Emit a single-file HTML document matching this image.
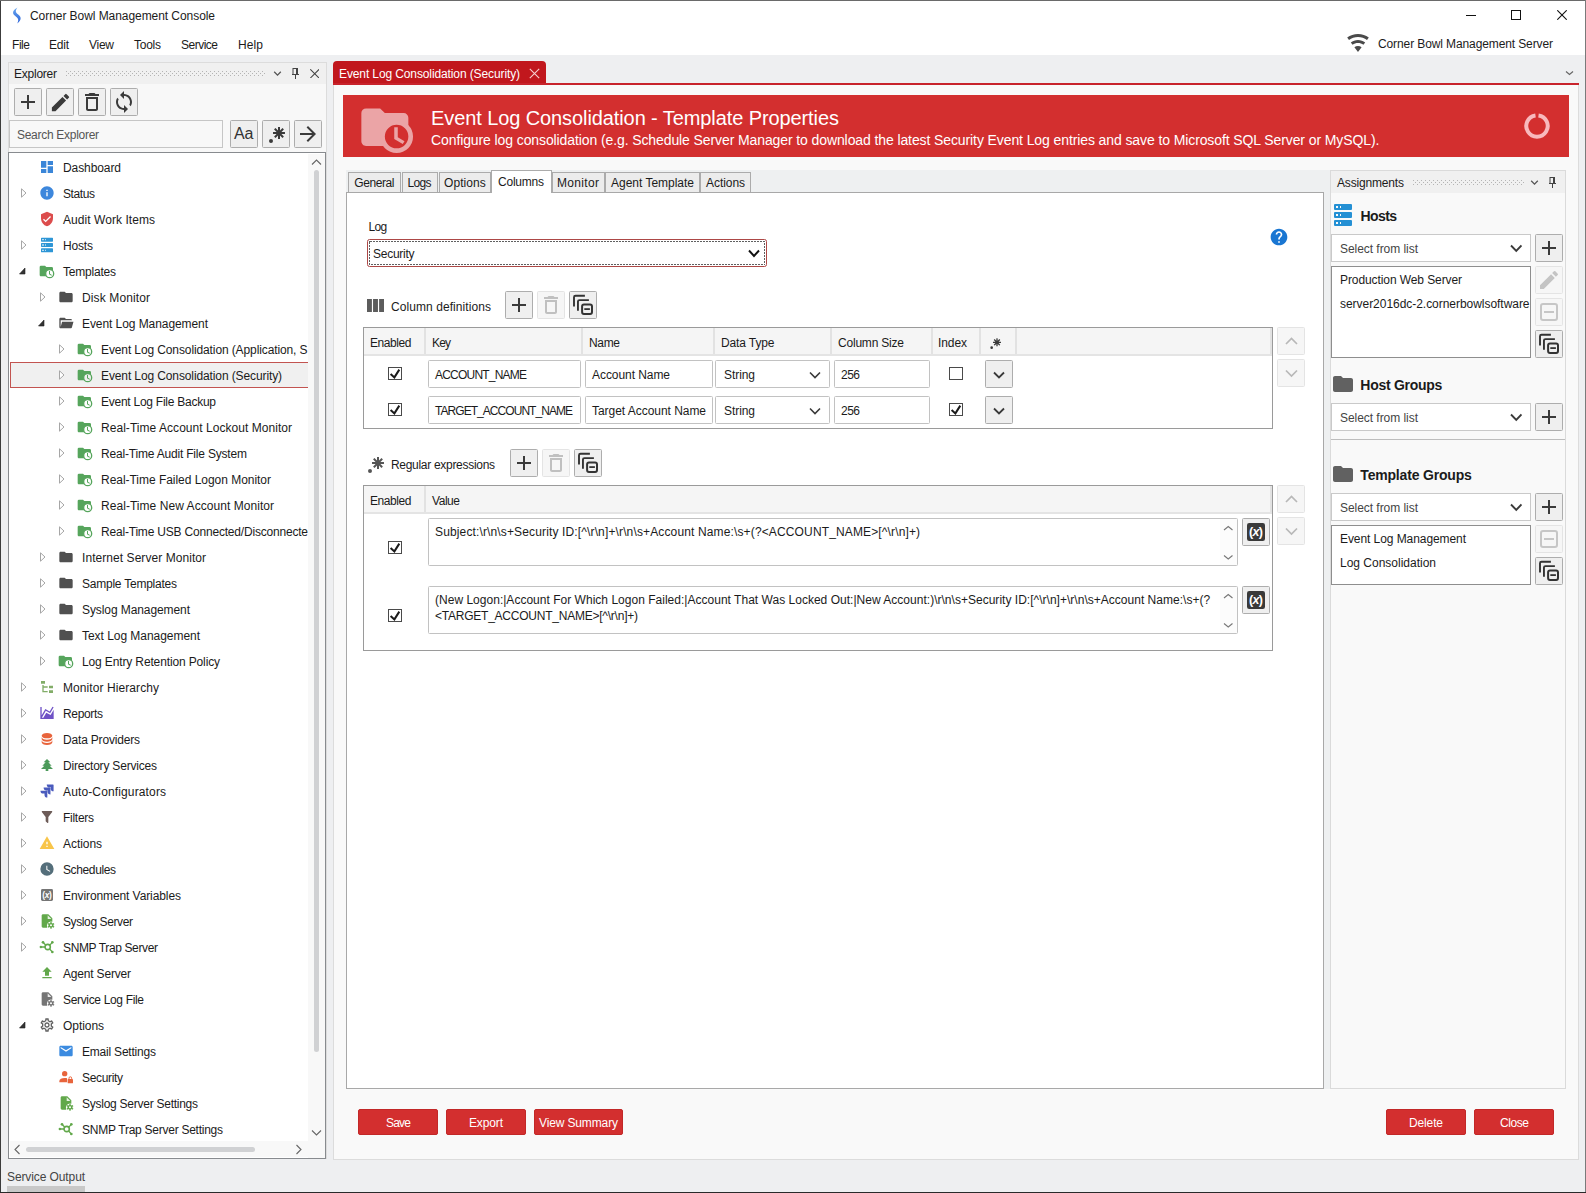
<!DOCTYPE html>
<html><head><meta charset="utf-8"><title>Corner Bowl Management Console</title>
<style>
html,body{margin:0;padding:0;}
body{width:1586px;height:1193px;overflow:hidden;background:#eeeff1;position:relative;font-family:"Liberation Sans",Arial,sans-serif;font-size:12px;}
#win{position:absolute;left:0;top:0;width:1586px;height:1193px;overflow:hidden;}
#win div,#win svg,#win span.t{position:absolute;}
span.t{white-space:pre;}
</style></head><body><div id="win">
<div style="left:0px;top:0px;width:1586px;height:31px;background:#fff;"></div>
<svg style="left:11px;top:6.5px;" width="12" height="18" viewBox="0 0 12 18"><defs><linearGradient id="lg1" x1="0" y1="0" x2="0" y2="1"><stop offset="0" stop-color="#6aa8f0"/><stop offset="1" stop-color="#2a62d8"/></linearGradient></defs><path d="M6.5 0.5C2 3 0.6 6.2 4 8.8C7.2 11.2 8.3 13 6.2 16.5C10.6 13.4 10.6 10 7.2 7.6C4.4 5.6 4 3.6 6.5 0.5Z" fill="url(#lg1)"/></svg>
<span class="t" style="left:30px;top:7.5px;font-size:12px;line-height:16px;color:#1b1b1b;letter-spacing:-0.060px;">Corner Bowl Management Console</span>
<div style="left:1466px;top:15px;width:10px;height:1px;background:#111;"></div>
<div style="left:1511px;top:10px;width:10px;height:10px;border:1px solid #111;box-sizing:border-box;"></div>
<svg style="left:1557px;top:10px;" width="10" height="10" viewBox="0 0 10 10"><path d="M0.3 0.3L9.7 9.7M9.7 0.3L0.3 9.7" stroke="#111" stroke-width="1.1"/></svg>
<div style="left:0px;top:31px;width:1586px;height:24px;background:#fff;"></div>
<span class="t" style="left:12px;top:36.5px;font-size:12px;line-height:16px;color:#1b1b1b;letter-spacing:-0.448px;">File</span>
<span class="t" style="left:49px;top:36.5px;font-size:12px;line-height:16px;color:#1b1b1b;letter-spacing:-0.224px;">Edit</span>
<span class="t" style="left:89px;top:36.5px;font-size:12px;line-height:16px;color:#1b1b1b;letter-spacing:-0.266px;">View</span>
<span class="t" style="left:134px;top:36.5px;font-size:12px;line-height:16px;color:#1b1b1b;letter-spacing:-0.254px;">Tools</span>
<span class="t" style="left:181px;top:36.5px;font-size:12px;line-height:16px;color:#1b1b1b;letter-spacing:-0.503px;">Service</span>
<span class="t" style="left:238px;top:36.5px;font-size:12px;line-height:16px;color:#1b1b1b;letter-spacing:0.104px;">Help</span>
<svg style="left:1346.2px;top:30.9px;" width="24" height="24" viewBox="0 0 24 24"><path d="M12,21L15.6,16.2C14.6,15.45 13.35,15 12,15C10.65,15 9.4,15.45 8.4,16.2L12,21M12,3C7.95,3 4.21,4.34 1.2,6.6L3,9C5.5,7.12 8.62,6 12,6C15.38,6 18.5,7.12 21,9L22.8,6.6C19.79,4.34 16.05,3 12,3M12,9C9.3,9 6.81,9.89 4.8,11.4L6.6,13.8C8.1,12.67 9.97,12 12,12C14.03,12 15.9,12.67 17.4,13.8L19.2,11.4C17.19,9.89 14.7,9 12,9Z" fill="#4a4a4a" /></svg>
<span class="t" style="left:1378px;top:36.0px;font-size:12px;line-height:16px;color:#1b1b1b;letter-spacing:-0.109px;">Corner Bowl Management Server</span>
<div style="left:8px;top:62px;width:319px;height:1097px;background:#f8f8f8;border:1px solid #dcdcdc;border-bottom:none;box-sizing:border-box;"></div>
<div style="left:9px;top:63px;width:317px;height:21px;background:#f0f0f0;"></div>
<span class="t" style="left:14px;top:65.5px;font-size:12px;line-height:16px;color:#1b1b1b;letter-spacing:-0.241px;">Explorer</span>
<svg style="left:66px;top:71px;" width="200" height="5" viewBox="0 0 200 5"><path d="M0 0h1v1h-1zM0 4h1v1h-1zM2 2h1v1h-1zM4 0h1v1h-1zM4 4h1v1h-1zM6 2h1v1h-1zM8 0h1v1h-1zM8 4h1v1h-1zM10 2h1v1h-1zM12 0h1v1h-1zM12 4h1v1h-1zM14 2h1v1h-1zM16 0h1v1h-1zM16 4h1v1h-1zM18 2h1v1h-1zM20 0h1v1h-1zM20 4h1v1h-1zM22 2h1v1h-1zM24 0h1v1h-1zM24 4h1v1h-1zM26 2h1v1h-1zM28 0h1v1h-1zM28 4h1v1h-1zM30 2h1v1h-1zM32 0h1v1h-1zM32 4h1v1h-1zM34 2h1v1h-1zM36 0h1v1h-1zM36 4h1v1h-1zM38 2h1v1h-1zM40 0h1v1h-1zM40 4h1v1h-1zM42 2h1v1h-1zM44 0h1v1h-1zM44 4h1v1h-1zM46 2h1v1h-1zM48 0h1v1h-1zM48 4h1v1h-1zM50 2h1v1h-1zM52 0h1v1h-1zM52 4h1v1h-1zM54 2h1v1h-1zM56 0h1v1h-1zM56 4h1v1h-1zM58 2h1v1h-1zM60 0h1v1h-1zM60 4h1v1h-1zM62 2h1v1h-1zM64 0h1v1h-1zM64 4h1v1h-1zM66 2h1v1h-1zM68 0h1v1h-1zM68 4h1v1h-1zM70 2h1v1h-1zM72 0h1v1h-1zM72 4h1v1h-1zM74 2h1v1h-1zM76 0h1v1h-1zM76 4h1v1h-1zM78 2h1v1h-1zM80 0h1v1h-1zM80 4h1v1h-1zM82 2h1v1h-1zM84 0h1v1h-1zM84 4h1v1h-1zM86 2h1v1h-1zM88 0h1v1h-1zM88 4h1v1h-1zM90 2h1v1h-1zM92 0h1v1h-1zM92 4h1v1h-1zM94 2h1v1h-1zM96 0h1v1h-1zM96 4h1v1h-1zM98 2h1v1h-1zM100 0h1v1h-1zM100 4h1v1h-1zM102 2h1v1h-1zM104 0h1v1h-1zM104 4h1v1h-1zM106 2h1v1h-1zM108 0h1v1h-1zM108 4h1v1h-1zM110 2h1v1h-1zM112 0h1v1h-1zM112 4h1v1h-1zM114 2h1v1h-1zM116 0h1v1h-1zM116 4h1v1h-1zM118 2h1v1h-1zM120 0h1v1h-1zM120 4h1v1h-1zM122 2h1v1h-1zM124 0h1v1h-1zM124 4h1v1h-1zM126 2h1v1h-1zM128 0h1v1h-1zM128 4h1v1h-1zM130 2h1v1h-1zM132 0h1v1h-1zM132 4h1v1h-1zM134 2h1v1h-1zM136 0h1v1h-1zM136 4h1v1h-1zM138 2h1v1h-1zM140 0h1v1h-1zM140 4h1v1h-1zM142 2h1v1h-1zM144 0h1v1h-1zM144 4h1v1h-1zM146 2h1v1h-1zM148 0h1v1h-1zM148 4h1v1h-1zM150 2h1v1h-1zM152 0h1v1h-1zM152 4h1v1h-1zM154 2h1v1h-1zM156 0h1v1h-1zM156 4h1v1h-1zM158 2h1v1h-1zM160 0h1v1h-1zM160 4h1v1h-1zM162 2h1v1h-1zM164 0h1v1h-1zM164 4h1v1h-1zM166 2h1v1h-1zM168 0h1v1h-1zM168 4h1v1h-1zM170 2h1v1h-1zM172 0h1v1h-1zM172 4h1v1h-1zM174 2h1v1h-1zM176 0h1v1h-1zM176 4h1v1h-1zM178 2h1v1h-1zM180 0h1v1h-1zM180 4h1v1h-1zM182 2h1v1h-1zM184 0h1v1h-1zM184 4h1v1h-1zM186 2h1v1h-1zM188 0h1v1h-1zM188 4h1v1h-1zM190 2h1v1h-1zM192 0h1v1h-1zM192 4h1v1h-1zM194 2h1v1h-1zM196 0h1v1h-1zM196 4h1v1h-1zM198 2h1v1h-1z" fill="#b4b4b4" shape-rendering="crispEdges"/></svg>
<svg style="left:270px;top:66px;" width="15" height="15" viewBox="0 0 24 24"><path d="M16.59 8.59L12 13.17 7.41 8.59 6 10l6 6 6-6z" fill="#555" /></svg>
<svg style="left:291px;top:67.5px;" width="9" height="11" viewBox="0 0 9 11"><path d="M2 0.5H6.5M2 0V6.5M1 6.5H8M4.5 7V11" stroke="#444" stroke-width="1" fill="none"/><rect x="5" y="0" width="2" height="6.5" fill="#444"/></svg>
<svg style="left:310px;top:69px;" width="9.4" height="9.4" viewBox="0 0 9.4 9.4"><path d="M0.3 0.3L9.1 9.1M9.1 0.3L0.3 9.1" stroke="#444" stroke-width="1.05"/></svg>
<div style="left:14px;top:88px;width:28px;height:28px;background:#efefef;border:1px solid #adadad;border-radius:1.5px;box-sizing:border-box;"></div>
<svg style="left:16.0px;top:90.0px;" width="24" height="24" viewBox="0 0 24 24"><path d="M19 13h-6v6h-2v-6H5v-2h6V5h2v6h6v2z" fill="#3a3a3a" /></svg>
<div style="left:46px;top:88px;width:28px;height:28px;background:#efefef;border:1px solid #adadad;border-radius:1.5px;box-sizing:border-box;"></div>
<svg style="left:48.5px;top:90.5px;" width="23" height="23" viewBox="0 0 24 24"><path d="M3 17.25V21h3.75L17.81 9.94l-3.75-3.75L3 17.25zM20.71 7.04a.996.996 0 0 0 0-1.41l-2.34-2.34a.996.996 0 0 0-1.41 0l-1.83 1.83 3.75 3.75 1.83-1.83z" fill="#3a3a3a" /></svg>
<div style="left:78px;top:88px;width:28px;height:28px;background:#efefef;border:1px solid #adadad;border-radius:1.5px;box-sizing:border-box;"></div>
<svg style="left:80.0px;top:90.0px;" width="24" height="24" viewBox="0 0 24 24"><path d="M6 19c0 1.1.9 2 2 2h8c1.1 0 2-.9 2-2V7H6v12zM8 9h8v10H8V9zm7.5-5l-1-1h-5l-1 1H5v2h14V4h-3.5z" fill="#3a3a3a" /></svg>
<div style="left:110px;top:88px;width:28px;height:28px;background:#efefef;border:1px solid #adadad;border-radius:1.5px;box-sizing:border-box;"></div>
<svg style="left:112.0px;top:90.0px;" width="24" height="24" viewBox="0 0 24 24"><path d="M12 4V1L8 5l4 4V6c3.31 0 6 2.69 6 6 0 1.01-.25 1.97-.7 2.8l1.46 1.46A7.93 7.93 0 0 0 20 12c0-4.42-3.58-8-8-8zm0 14c-3.31 0-6-2.69-6-6 0-1.01.25-1.97.7-2.8L5.24 7.74A7.93 7.93 0 0 0 4 12c0 4.42 3.58 8 8 8v3l4-4-4-4v3z" fill="#3a3a3a" /></svg>
<div style="left:9px;top:120px;width:214px;height:28px;background:#f8f8f8;border:1px solid #c6c6c6;box-sizing:border-box;"></div>
<span class="t" style="left:17px;top:126.5px;font-size:12px;line-height:16px;color:#555;letter-spacing:-0.288px;">Search Explorer</span>
<div style="left:230px;top:120px;width:28px;height:28px;background:#efefef;border:1px solid #adadad;border-radius:1.5px;box-sizing:border-box;"></div>
<span class="t" style="left:234px;top:123.5px;font-size:16px;line-height:20px;color:#333;letter-spacing:-0.078px;">Aa</span>
<div style="left:262px;top:120px;width:28px;height:28px;background:#efefef;border:1px solid #adadad;border-radius:1.5px;box-sizing:border-box;"></div>
<svg style="left:264px;top:121.5px;" width="24" height="24" viewBox="0 0 24 24"><path d="M16,16.92C15.67,16.97 15.34,17 15,17C14.66,17 14.33,16.97 14,16.92V13.41L11.5,15.89C11,15.5 10.5,15 10.11,14.5L12.59,12H9.08C9.03,11.67 9,11.34 9,11C9,10.66 9.03,10.33 9.08,10H12.59L10.11,7.5C10.3,7.25 10.5,7 10.76,6.76V6.76C11,6.5 11.25,6.3 11.5,6.11L14,8.59V5.08C14.33,5.03 14.66,5 15,5C15.34,5 15.67,5.03 16,5.08V8.59L18.5,6.11C19,6.5 19.5,7 19.89,7.5L17.41,10H20.92C20.97,10.33 21,10.66 21,11C21,11.34 20.97,11.67 20.92,12H17.41L19.89,14.5C19.7,14.75 19.5,15 19.24,15.24V15.24C19,15.5 18.75,15.7 18.5,15.89L16,13.41V16.92H16V16.92M5,19A2,2 0 0,1 7,17A2,2 0 0,1 9,19A2,2 0 0,1 7,21A2,2 0 0,1 5,19H5Z" fill="#3a3a3a" /></svg>
<div style="left:294px;top:120px;width:28px;height:28px;background:#efefef;border:1px solid #adadad;border-radius:1.5px;box-sizing:border-box;"></div>
<svg style="left:296px;top:122px;" width="24" height="24" viewBox="0 0 24 24"><path d="M12 4l-1.41 1.41L16.17 11H4v2h12.17l-5.58 5.59L12 20l8-8z" fill="#3a3a3a" /></svg>
<div style="left:8px;top:152px;width:318px;height:1007px;background:#fff;border:1px solid #888b8f;box-sizing:border-box;"></div>
<div style="left:9px;top:153px;width:298.5px;height:988px;overflow:hidden;"><svg style="left:30px;top:6.0px;" width="16" height="16" viewBox="0 0 24 24"><path d="M3 13h8V3H3v10zm0 8h8v-6H3v6zm10 0h8V11h-8v10zm0-18v6h8V3h-8z" fill="#3b86d8" /></svg>
<span class="t" style="left:54px;top:6.5px;font-size:12px;line-height:16px;color:#1b1b1b;letter-spacing:-0.088px;">Dashboard</span>
<svg style="left:12px;top:35.0px;" width="6" height="10" viewBox="0 0 6 10"><path d="M0.5 0.8L5 5L0.5 9.2Z" fill="#fff" stroke="#a6a6a6" stroke-width="1"/></svg>
<svg style="left:30px;top:32.0px;" width="16" height="16" viewBox="0 0 24 24"><path d="M12 2C6.48 2 2 6.48 2 12s4.48 10 10 10 10-4.48 10-10S17.52 2 12 2zm1 15h-2v-6h2v6zm0-8h-2V7h2v2z" fill="#3d87dc" /></svg>
<span class="t" style="left:54px;top:32.5px;font-size:12px;line-height:16px;color:#1b1b1b;letter-spacing:-0.400px;">Status</span>
<svg style="left:30px;top:58.0px;" width="16" height="16" viewBox="0 0 24 24"><path d="M12 1L3 5v6c0 5.55 3.84 10.74 9 12 5.16-1.26 9-6.45 9-12V5l-9-4zm-2 16l-4-4 1.41-1.41L10 14.17l6.59-6.59L18 9l-8 8z" fill="#dc4c4c" /></svg>
<span class="t" style="left:54px;top:58.5px;font-size:12px;line-height:16px;color:#1b1b1b;letter-spacing:0.059px;">Audit Work Items</span>
<svg style="left:12px;top:87.0px;" width="6" height="10" viewBox="0 0 6 10"><path d="M0.5 0.8L5 5L0.5 9.2Z" fill="#fff" stroke="#a6a6a6" stroke-width="1"/></svg>
<svg style="left:30px;top:84.0px;" width="16" height="16" viewBox="0 0 24 24"><path d="M4,1H20A1,1 0 0,1 21,2V6A1,1 0 0,1 20,7H4A1,1 0 0,1 3,6V2A1,1 0 0,1 4,1M4,9H20A1,1 0 0,1 21,10V14A1,1 0 0,1 20,15H4A1,1 0 0,1 3,14V10A1,1 0 0,1 4,9M4,17H20A1,1 0 0,1 21,18V22A1,1 0 0,1 20,23H4A1,1 0 0,1 3,22V18A1,1 0 0,1 4,17M9,5H10V3H9V5M9,13H10V11H9V13M9,21H10V19H9V21M5,3V5H7V3H5M5,11V13H7V11H5M5,19V21H7V19H5Z" fill="#2e96d6" fill-rule="evenodd"/></svg>
<span class="t" style="left:54px;top:84.5px;font-size:12px;line-height:16px;color:#1b1b1b;letter-spacing:-0.168px;">Hosts</span>
<svg style="left:9.5px;top:114.0px;" width="7" height="8" viewBox="0 0 7 8"><path d="M6 1V7H0.5Z" fill="#333" stroke="#222" stroke-width="0.6"/></svg>
<svg style="left:30px;top:110.0px;" width="16" height="16" viewBox="0 0 24 24"><path d="M3 20C1.9 20 1 19.1 1 18V6a2 2 0 0 1 2-2h6l2 2h8a2 2 0 0 1 2 2v10a2 2 0 0 1-2 2z" fill="#56a55c" /><circle cx="16" cy="16" r="6" fill="#ffffff" stroke="#56a55c" stroke-width="2"/><path d="M15,12H16.5V16.25L19.36,17.94L18.61,19.16L15,17V12" fill="#56a55c" /></svg>
<span class="t" style="left:54px;top:110.5px;font-size:12px;line-height:16px;color:#1b1b1b;letter-spacing:-0.211px;">Templates</span>
<svg style="left:31px;top:139.0px;" width="6" height="10" viewBox="0 0 6 10"><path d="M0.5 0.8L5 5L0.5 9.2Z" fill="#fff" stroke="#a6a6a6" stroke-width="1"/></svg>
<svg style="left:49px;top:136.0px;" width="16" height="16" viewBox="0 0 24 24"><path d="M10 4H4c-1.1 0-1.99.9-1.99 2L2 18c0 1.1.9 2 2 2h16c1.1 0 2-.9 2-2V8c0-1.1-.9-2-2-2h-8l-2-2z" fill="#505050" /></svg>
<span class="t" style="left:73px;top:136.5px;font-size:12px;line-height:16px;color:#1b1b1b;letter-spacing:0.119px;">Disk Monitor</span>
<svg style="left:28.5px;top:166.0px;" width="7" height="8" viewBox="0 0 7 8"><path d="M6 1V7H0.5Z" fill="#333" stroke="#222" stroke-width="0.6"/></svg>
<svg style="left:49px;top:162.0px;" width="16" height="16" viewBox="0 0 24 24"><path d="M19,20H4C2.89,20 2,19.1 2,18V6C2,4.89 2.89,4 4,4H10L12,6H19A2,2 0 0,1 21,8H21L4,8V18L6.14,10H23.21L20.93,18.5C20.7,19.37 19.92,20 19,20Z" fill="#505050" /></svg>
<span class="t" style="left:73px;top:162.5px;font-size:12px;line-height:16px;color:#1b1b1b;letter-spacing:-0.072px;">Event Log Management</span>
<svg style="left:50px;top:191.0px;" width="6" height="10" viewBox="0 0 6 10"><path d="M0.5 0.8L5 5L0.5 9.2Z" fill="#fff" stroke="#a6a6a6" stroke-width="1"/></svg>
<svg style="left:68px;top:188.0px;" width="16" height="16" viewBox="0 0 24 24"><path d="M3 20C1.9 20 1 19.1 1 18V6a2 2 0 0 1 2-2h6l2 2h8a2 2 0 0 1 2 2v10a2 2 0 0 1-2 2z" fill="#56a55c" /><circle cx="16" cy="16" r="6" fill="#ffffff" stroke="#56a55c" stroke-width="2"/><path d="M15,12H16.5V16.25L19.36,17.94L18.61,19.16L15,17V12" fill="#56a55c" /></svg>
<span class="t" style="left:92px;top:188.5px;font-size:12px;line-height:16px;color:#1b1b1b;letter-spacing:-0.112px;">Event Log Consolidation (Application, S</span>
<div style="left:1px;top:209.0px;width:320px;height:26px;background:#f0f0f0;border:1px solid #c25450;box-sizing:border-box;"></div>
<svg style="left:50px;top:217.0px;" width="6" height="10" viewBox="0 0 6 10"><path d="M0.5 0.8L5 5L0.5 9.2Z" fill="#fff" stroke="#a6a6a6" stroke-width="1"/></svg>
<svg style="left:68px;top:214.0px;" width="16" height="16" viewBox="0 0 24 24"><path d="M3 20C1.9 20 1 19.1 1 18V6a2 2 0 0 1 2-2h6l2 2h8a2 2 0 0 1 2 2v10a2 2 0 0 1-2 2z" fill="#56a55c" /><circle cx="16" cy="16" r="6" fill="#f0f0f0" stroke="#56a55c" stroke-width="2"/><path d="M15,12H16.5V16.25L19.36,17.94L18.61,19.16L15,17V12" fill="#56a55c" /></svg>
<span class="t" style="left:92px;top:214.5px;font-size:12px;line-height:16px;color:#1b1b1b;letter-spacing:-0.113px;">Event Log Consolidation (Security)</span>
<svg style="left:50px;top:243.0px;" width="6" height="10" viewBox="0 0 6 10"><path d="M0.5 0.8L5 5L0.5 9.2Z" fill="#fff" stroke="#a6a6a6" stroke-width="1"/></svg>
<svg style="left:68px;top:240.0px;" width="16" height="16" viewBox="0 0 24 24"><path d="M3 20C1.9 20 1 19.1 1 18V6a2 2 0 0 1 2-2h6l2 2h8a2 2 0 0 1 2 2v10a2 2 0 0 1-2 2z" fill="#56a55c" /><circle cx="16" cy="16" r="6" fill="#ffffff" stroke="#56a55c" stroke-width="2"/><path d="M15,12H16.5V16.25L19.36,17.94L18.61,19.16L15,17V12" fill="#56a55c" /></svg>
<span class="t" style="left:92px;top:240.5px;font-size:12px;line-height:16px;color:#1b1b1b;letter-spacing:-0.252px;">Event Log File Backup</span>
<svg style="left:50px;top:269.0px;" width="6" height="10" viewBox="0 0 6 10"><path d="M0.5 0.8L5 5L0.5 9.2Z" fill="#fff" stroke="#a6a6a6" stroke-width="1"/></svg>
<svg style="left:68px;top:266.0px;" width="16" height="16" viewBox="0 0 24 24"><path d="M3 20C1.9 20 1 19.1 1 18V6a2 2 0 0 1 2-2h6l2 2h8a2 2 0 0 1 2 2v10a2 2 0 0 1-2 2z" fill="#56a55c" /><circle cx="16" cy="16" r="6" fill="#ffffff" stroke="#56a55c" stroke-width="2"/><path d="M15,12H16.5V16.25L19.36,17.94L18.61,19.16L15,17V12" fill="#56a55c" /></svg>
<span class="t" style="left:92px;top:266.5px;font-size:12px;line-height:16px;color:#1b1b1b;letter-spacing:0.043px;">Real-Time Account Lockout Monitor</span>
<svg style="left:50px;top:295.0px;" width="6" height="10" viewBox="0 0 6 10"><path d="M0.5 0.8L5 5L0.5 9.2Z" fill="#fff" stroke="#a6a6a6" stroke-width="1"/></svg>
<svg style="left:68px;top:292.0px;" width="16" height="16" viewBox="0 0 24 24"><path d="M3 20C1.9 20 1 19.1 1 18V6a2 2 0 0 1 2-2h6l2 2h8a2 2 0 0 1 2 2v10a2 2 0 0 1-2 2z" fill="#56a55c" /><circle cx="16" cy="16" r="6" fill="#ffffff" stroke="#56a55c" stroke-width="2"/><path d="M15,12H16.5V16.25L19.36,17.94L18.61,19.16L15,17V12" fill="#56a55c" /></svg>
<span class="t" style="left:92px;top:292.5px;font-size:12px;line-height:16px;color:#1b1b1b;letter-spacing:-0.190px;">Real-Time Audit File System</span>
<svg style="left:50px;top:321.0px;" width="6" height="10" viewBox="0 0 6 10"><path d="M0.5 0.8L5 5L0.5 9.2Z" fill="#fff" stroke="#a6a6a6" stroke-width="1"/></svg>
<svg style="left:68px;top:318.0px;" width="16" height="16" viewBox="0 0 24 24"><path d="M3 20C1.9 20 1 19.1 1 18V6a2 2 0 0 1 2-2h6l2 2h8a2 2 0 0 1 2 2v10a2 2 0 0 1-2 2z" fill="#56a55c" /><circle cx="16" cy="16" r="6" fill="#ffffff" stroke="#56a55c" stroke-width="2"/><path d="M15,12H16.5V16.25L19.36,17.94L18.61,19.16L15,17V12" fill="#56a55c" /></svg>
<span class="t" style="left:92px;top:318.5px;font-size:12px;line-height:16px;color:#1b1b1b;letter-spacing:-0.033px;">Real-Time Failed Logon Monitor</span>
<svg style="left:50px;top:347.0px;" width="6" height="10" viewBox="0 0 6 10"><path d="M0.5 0.8L5 5L0.5 9.2Z" fill="#fff" stroke="#a6a6a6" stroke-width="1"/></svg>
<svg style="left:68px;top:344.0px;" width="16" height="16" viewBox="0 0 24 24"><path d="M3 20C1.9 20 1 19.1 1 18V6a2 2 0 0 1 2-2h6l2 2h8a2 2 0 0 1 2 2v10a2 2 0 0 1-2 2z" fill="#56a55c" /><circle cx="16" cy="16" r="6" fill="#ffffff" stroke="#56a55c" stroke-width="2"/><path d="M15,12H16.5V16.25L19.36,17.94L18.61,19.16L15,17V12" fill="#56a55c" /></svg>
<span class="t" style="left:92px;top:344.5px;font-size:12px;line-height:16px;color:#1b1b1b;letter-spacing:0.049px;">Real-Time New Account Monitor</span>
<svg style="left:50px;top:373.0px;" width="6" height="10" viewBox="0 0 6 10"><path d="M0.5 0.8L5 5L0.5 9.2Z" fill="#fff" stroke="#a6a6a6" stroke-width="1"/></svg>
<svg style="left:68px;top:370.0px;" width="16" height="16" viewBox="0 0 24 24"><path d="M3 20C1.9 20 1 19.1 1 18V6a2 2 0 0 1 2-2h6l2 2h8a2 2 0 0 1 2 2v10a2 2 0 0 1-2 2z" fill="#56a55c" /><circle cx="16" cy="16" r="6" fill="#ffffff" stroke="#56a55c" stroke-width="2"/><path d="M15,12H16.5V16.25L19.36,17.94L18.61,19.16L15,17V12" fill="#56a55c" /></svg>
<span class="t" style="left:92px;top:370.5px;font-size:12px;line-height:16px;color:#1b1b1b;letter-spacing:-0.195px;">Real-Time USB Connected/Disconnecte</span>
<svg style="left:31px;top:399.0px;" width="6" height="10" viewBox="0 0 6 10"><path d="M0.5 0.8L5 5L0.5 9.2Z" fill="#fff" stroke="#a6a6a6" stroke-width="1"/></svg>
<svg style="left:49px;top:396.0px;" width="16" height="16" viewBox="0 0 24 24"><path d="M10 4H4c-1.1 0-1.99.9-1.99 2L2 18c0 1.1.9 2 2 2h16c1.1 0 2-.9 2-2V8c0-1.1-.9-2-2-2h-8l-2-2z" fill="#505050" /></svg>
<span class="t" style="left:73px;top:396.5px;font-size:12px;line-height:16px;color:#1b1b1b;letter-spacing:0.060px;">Internet Server Monitor</span>
<svg style="left:31px;top:425.0px;" width="6" height="10" viewBox="0 0 6 10"><path d="M0.5 0.8L5 5L0.5 9.2Z" fill="#fff" stroke="#a6a6a6" stroke-width="1"/></svg>
<svg style="left:49px;top:422.0px;" width="16" height="16" viewBox="0 0 24 24"><path d="M10 4H4c-1.1 0-1.99.9-1.99 2L2 18c0 1.1.9 2 2 2h16c1.1 0 2-.9 2-2V8c0-1.1-.9-2-2-2h-8l-2-2z" fill="#505050" /></svg>
<span class="t" style="left:73px;top:422.5px;font-size:12px;line-height:16px;color:#1b1b1b;letter-spacing:-0.232px;">Sample Templates</span>
<svg style="left:31px;top:451.0px;" width="6" height="10" viewBox="0 0 6 10"><path d="M0.5 0.8L5 5L0.5 9.2Z" fill="#fff" stroke="#a6a6a6" stroke-width="1"/></svg>
<svg style="left:49px;top:448.0px;" width="16" height="16" viewBox="0 0 24 24"><path d="M10 4H4c-1.1 0-1.99.9-1.99 2L2 18c0 1.1.9 2 2 2h16c1.1 0 2-.9 2-2V8c0-1.1-.9-2-2-2h-8l-2-2z" fill="#505050" /></svg>
<span class="t" style="left:73px;top:448.5px;font-size:12px;line-height:16px;color:#1b1b1b;letter-spacing:-0.086px;">Syslog Management</span>
<svg style="left:31px;top:477.0px;" width="6" height="10" viewBox="0 0 6 10"><path d="M0.5 0.8L5 5L0.5 9.2Z" fill="#fff" stroke="#a6a6a6" stroke-width="1"/></svg>
<svg style="left:49px;top:474.0px;" width="16" height="16" viewBox="0 0 24 24"><path d="M10 4H4c-1.1 0-1.99.9-1.99 2L2 18c0 1.1.9 2 2 2h16c1.1 0 2-.9 2-2V8c0-1.1-.9-2-2-2h-8l-2-2z" fill="#505050" /></svg>
<span class="t" style="left:73px;top:474.5px;font-size:12px;line-height:16px;color:#1b1b1b;letter-spacing:-0.039px;">Text Log Management</span>
<svg style="left:31px;top:503.0px;" width="6" height="10" viewBox="0 0 6 10"><path d="M0.5 0.8L5 5L0.5 9.2Z" fill="#fff" stroke="#a6a6a6" stroke-width="1"/></svg>
<svg style="left:49px;top:500.0px;" width="16" height="16" viewBox="0 0 24 24"><path d="M3 20C1.9 20 1 19.1 1 18V6a2 2 0 0 1 2-2h6l2 2h8a2 2 0 0 1 2 2v10a2 2 0 0 1-2 2z" fill="#56a55c" /><circle cx="16" cy="16" r="6" fill="#ffffff" stroke="#56a55c" stroke-width="2"/><path d="M15,12H16.5V16.25L19.36,17.94L18.61,19.16L15,17V12" fill="#56a55c" /></svg>
<span class="t" style="left:73px;top:500.5px;font-size:12px;line-height:16px;color:#1b1b1b;letter-spacing:-0.135px;">Log Entry Retention Policy</span>
<svg style="left:12px;top:529.0px;" width="6" height="10" viewBox="0 0 6 10"><path d="M0.5 0.8L5 5L0.5 9.2Z" fill="#fff" stroke="#a6a6a6" stroke-width="1"/></svg>
<svg style="left:30px;top:526.0px;" width="16" height="16" viewBox="0 0 24 24"><path d="M3,3H9V7H3V3M15,10H21V14H15V10M15,17H21V21H15V17M13,13H7V18H13V20H7L5,20V9H7V11H13V13Z" fill="#82ad68" /></svg>
<span class="t" style="left:54px;top:526.5px;font-size:12px;line-height:16px;color:#1b1b1b;letter-spacing:0.081px;">Monitor Hierarchy</span>
<svg style="left:12px;top:555.0px;" width="6" height="10" viewBox="0 0 6 10"><path d="M0.5 0.8L5 5L0.5 9.2Z" fill="#fff" stroke="#a6a6a6" stroke-width="1"/></svg>
<svg style="left:30px;top:552.0px;" width="16" height="16" viewBox="0 0 24 24"><path d="M17.45,15.18L22,7.31V19L22,21H2V3H4V15.54L9.5,6L16,9.78L20.24,2.45L21.97,3.45L16.74,12.5L10.23,8.75L4.31,19H6.57L10.96,11.44L17.45,15.18Z" fill="#6f52c6" /></svg>
<span class="t" style="left:54px;top:552.5px;font-size:12px;line-height:16px;color:#1b1b1b;letter-spacing:-0.336px;">Reports</span>
<svg style="left:12px;top:581.0px;" width="6" height="10" viewBox="0 0 6 10"><path d="M0.5 0.8L5 5L0.5 9.2Z" fill="#fff" stroke="#a6a6a6" stroke-width="1"/></svg>
<svg style="left:30px;top:578.0px;" width="16" height="16" viewBox="0 0 24 24"><path d="M12,3C7.58,3 4,4.79 4,7C4,9.21 7.58,11 12,11C16.42,11 20,9.21 20,7C20,4.79 16.42,3 12,3M4,9V12C4,14.21 7.58,16 12,16C16.42,16 20,14.21 20,12V9C20,11.21 16.42,13 12,13C7.58,13 4,11.21 4,9M4,14V17C4,19.21 7.58,21 12,21C16.42,21 20,19.21 20,17V14C20,16.21 16.42,18 12,18C7.58,18 4,16.21 4,14Z" fill="#e8643c" /></svg>
<span class="t" style="left:54px;top:578.5px;font-size:12px;line-height:16px;color:#1b1b1b;letter-spacing:-0.181px;">Data Providers</span>
<svg style="left:12px;top:607.0px;" width="6" height="10" viewBox="0 0 6 10"><path d="M0.5 0.8L5 5L0.5 9.2Z" fill="#fff" stroke="#a6a6a6" stroke-width="1"/></svg>
<svg style="left:30px;top:604.0px;" width="16" height="16" viewBox="0 0 24 24"><path d="M10,21V18H3L8,13H5L10,8H7L12,3L17,8H14L19,13H16L21,18H14V21H10Z" fill="#4c9a5a" /></svg>
<span class="t" style="left:54px;top:604.5px;font-size:12px;line-height:16px;color:#1b1b1b;letter-spacing:-0.198px;">Directory Services</span>
<svg style="left:12px;top:633.0px;" width="6" height="10" viewBox="0 0 6 10"><path d="M0.5 0.8L5 5L0.5 9.2Z" fill="#fff" stroke="#a6a6a6" stroke-width="1"/></svg>
<svg style="left:30px;top:630.0px;" width="16" height="16" viewBox="0 0 24 24"><g transform="translate(2.2 2.2) scale(0.82)"><path d="M11.571 11.513H0a5.218 5.218 0 0 0 5.232 5.215h2.13v2.057A5.215 5.215 0 0 0 12.575 24V12.518a1.005 1.005 0 0 0-1.005-1.005zm5.723-5.756H5.736a5.215 5.215 0 0 0 5.215 5.214h2.129v2.058a5.218 5.218 0 0 0 5.215 5.214V6.758a1.001 1.001 0 0 0-1.001-1.001zM23.013 0H11.455a5.215 5.215 0 0 0 5.215 5.215h2.129v2.057A5.215 5.215 0 0 0 24 12.483V1.005A1.001 1.001 0 0 0 23.013 0Z" fill="#4a5bbd" /></g></svg>
<span class="t" style="left:54px;top:630.5px;font-size:12px;line-height:16px;color:#1b1b1b;letter-spacing:0.135px;">Auto-Configurators</span>
<svg style="left:12px;top:659.0px;" width="6" height="10" viewBox="0 0 6 10"><path d="M0.5 0.8L5 5L0.5 9.2Z" fill="#fff" stroke="#a6a6a6" stroke-width="1"/></svg>
<svg style="left:30px;top:656.0px;" width="16" height="16" viewBox="0 0 24 24"><path d="M14,12V19.88C14.04,20.18 13.94,20.5 13.71,20.71C13.32,21.1 12.69,21.1 12.3,20.71L10.29,18.7C10.06,18.47 9.96,18.16 10,17.87V12H9.97L4.21,4.62C3.87,4.19 3.95,3.56 4.38,3.22C4.57,3.08 4.78,3 5,3V3H19V3C19.22,3 19.43,3.08 19.62,3.22C20.05,3.56 20.13,4.19 19.79,4.62L14.03,12H14Z" fill="#6d5c58" /></svg>
<span class="t" style="left:54px;top:656.5px;font-size:12px;line-height:16px;color:#1b1b1b;letter-spacing:-0.279px;">Filters</span>
<svg style="left:12px;top:685.0px;" width="6" height="10" viewBox="0 0 6 10"><path d="M0.5 0.8L5 5L0.5 9.2Z" fill="#fff" stroke="#a6a6a6" stroke-width="1"/></svg>
<svg style="left:30px;top:682.0px;" width="16" height="16" viewBox="0 0 24 24"><path d="M1 21h22L12 2 1 21zm12-3h-2v-2h2v2zm0-4h-2v-4h2v4z" fill="#f8c54a" /></svg>
<span class="t" style="left:54px;top:682.5px;font-size:12px;line-height:16px;color:#1b1b1b;letter-spacing:-0.057px;">Actions</span>
<svg style="left:12px;top:711.0px;" width="6" height="10" viewBox="0 0 6 10"><path d="M0.5 0.8L5 5L0.5 9.2Z" fill="#fff" stroke="#a6a6a6" stroke-width="1"/></svg>
<svg style="left:30px;top:708.0px;" width="16" height="16" viewBox="0 0 24 24"><path d="M12,2A10,10 0 0,0 2,12A10,10 0 0,0 12,22A10,10 0 0,0 22,12A10,10 0 0,0 12,2M16.2,16.2L11,13V7H12.5V12.2L17,14.9L16.2,16.2Z" fill="#546e7a" /></svg>
<span class="t" style="left:54px;top:708.5px;font-size:12px;line-height:16px;color:#1b1b1b;letter-spacing:-0.379px;">Schedules</span>
<svg style="left:12px;top:737.0px;" width="6" height="10" viewBox="0 0 6 10"><path d="M0.5 0.8L5 5L0.5 9.2Z" fill="#fff" stroke="#a6a6a6" stroke-width="1"/></svg>
<svg style="left:30px;top:734.0px;" width="16" height="16" viewBox="0 0 24 24"><rect x="3" y="3" width="18" height="18" rx="2.2" fill="#757575"/><text x="5" y="16.4" font-family="Liberation Sans, sans-serif" font-size="12.5" font-weight="bold" textLength="14" lengthAdjust="spacing" fill="#fff">(<tspan font-style="italic">x</tspan>)</text></svg>
<span class="t" style="left:54px;top:734.5px;font-size:12px;line-height:16px;color:#1b1b1b;letter-spacing:-0.091px;">Environment Variables</span>
<svg style="left:12px;top:763.0px;" width="6" height="10" viewBox="0 0 6 10"><path d="M0.5 0.8L5 5L0.5 9.2Z" fill="#fff" stroke="#a6a6a6" stroke-width="1"/></svg>
<svg style="left:30px;top:760.0px;" width="16" height="16" viewBox="0 0 24 24"><path d="M6 2h8l6 6v5.2a6.3 6.3 0 0 0-7.6 8.8H6c-1.1 0-2-.9-2-2V4c0-1.1.9-2 2-2z" fill="#62a84b"/><path d="M13 3.5V9h5.5z" fill="#fff" opacity="0.85"/><circle cx="18" cy="18.5" r="3.6" fill="#62a84b"/><path d="M18 13.2v10.6M13.4 15.85l9.2 5.3M13.4 21.15l9.2-5.3" stroke="#62a84b" stroke-width="2"/><circle cx="18" cy="18.5" r="1.5" fill="#fff"/></svg>
<span class="t" style="left:54px;top:760.5px;font-size:12px;line-height:16px;color:#1b1b1b;letter-spacing:-0.391px;">Syslog Server</span>
<svg style="left:12px;top:789.0px;" width="6" height="10" viewBox="0 0 6 10"><path d="M0.5 0.8L5 5L0.5 9.2Z" fill="#fff" stroke="#a6a6a6" stroke-width="1"/></svg>
<svg style="left:30px;top:786.0px;" width="16" height="16" viewBox="0 0 24 24"><circle cx="13" cy="12" r="4" fill="none" stroke="#62a84b" stroke-width="2.4"/><path d="M10 9L6.5 5.5M16 9.5l3.5-4M16 15l3.5 4M9 12H3.5" stroke="#62a84b" stroke-width="2"/><circle cx="6" cy="5" r="2" fill="#62a84b"/><circle cx="20" cy="5" r="2" fill="#62a84b"/><circle cx="20" cy="19.5" r="2" fill="#62a84b"/><circle cx="2.8" cy="12" r="1.9" fill="#62a84b"/></svg>
<span class="t" style="left:54px;top:786.5px;font-size:12px;line-height:16px;color:#1b1b1b;letter-spacing:-0.365px;">SNMP Trap Server</span>
<svg style="left:30px;top:812.0px;" width="16" height="16" viewBox="0 0 24 24"><path d="M9 16h6v-6h4l-7-7-7 7h4zm-4 2h14v2H5z" fill="#62a84b" /></svg>
<span class="t" style="left:54px;top:812.5px;font-size:12px;line-height:16px;color:#1b1b1b;letter-spacing:-0.183px;">Agent Server</span>
<svg style="left:30px;top:838.0px;" width="16" height="16" viewBox="0 0 24 24"><path d="M6 2h8l6 6v5.2a6.3 6.3 0 0 0-7.6 8.8H6c-1.1 0-2-.9-2-2V4c0-1.1.9-2 2-2z" fill="#757575"/><path d="M13 3.5V9h5.5z" fill="#fff" opacity="0.85"/><circle cx="18" cy="18.5" r="3.6" fill="#757575"/><path d="M18 13.2v10.6M13.4 15.85l9.2 5.3M13.4 21.15l9.2-5.3" stroke="#757575" stroke-width="2"/><circle cx="18" cy="18.5" r="1.5" fill="#fff"/></svg>
<span class="t" style="left:54px;top:838.5px;font-size:12px;line-height:16px;color:#1b1b1b;letter-spacing:-0.335px;">Service Log File</span>
<svg style="left:9.5px;top:868.0px;" width="7" height="8" viewBox="0 0 7 8"><path d="M6 1V7H0.5Z" fill="#333" stroke="#222" stroke-width="0.6"/></svg>
<svg style="left:30px;top:864.0px;" width="16" height="16" viewBox="0 0 24 24"><path d="M19.43 12.98c.04-.32.07-.64.07-.98 0-.34-.03-.66-.07-.98l2.11-1.65c.19-.15.24-.42.12-.64l-2-3.46a.5.5 0 0 0-.61-.22l-2.49 1c-.52-.4-1.08-.73-1.69-.98l-.38-2.65A.488.488 0 0 0 14 2h-4c-.25 0-.46.18-.49.42l-.38 2.65c-.61.25-1.17.59-1.69.98l-2.49-1a.566.566 0 0 0-.18-.03c-.17 0-.34.09-.43.25l-2 3.46c-.13.22-.07.49.12.64l2.11 1.65c-.04.32-.07.65-.07.98 0 .33.03.66.07.98l-2.11 1.65c-.19.15-.24.42-.12.64l2 3.46a.5.5 0 0 0 .61.22l2.49-1c.52.4 1.08.73 1.69.98l.38 2.65c.03.24.24.42.49.42h4c.25 0 .46-.18.49-.42l.38-2.65c.61-.25 1.17-.59 1.69-.98l2.49 1c.06.02.12.03.18.03.17 0 .34-.09.43-.25l2-3.46c.12-.22.07-.49-.12-.64l-2.11-1.65zm-1.98-1.71c.04.31.05.52.05.73 0 .21-.02.43-.05.73l-.14 1.13.89.7 1.08.84-.7 1.21-1.27-.51-1.04-.42-.9.68c-.43.32-.84.56-1.25.73l-1.06.43-.16 1.13-.2 1.35h-1.4l-.19-1.35-.16-1.13-1.06-.43c-.43-.18-.83-.41-1.23-.71l-.91-.7-1.06.43-1.27.51-.7-1.21 1.08-.84.89-.7-.14-1.13c-.03-.31-.05-.54-.05-.74s.02-.43.05-.73l.14-1.13-.89-.7-1.08-.84.7-1.21 1.27.51 1.04.42.9-.68c.43-.32.84-.56 1.25-.73l1.06-.43.16-1.13.2-1.35h1.39l.19 1.35.16 1.13 1.06.43c.43.18.83.41 1.23.71l.91.7 1.06-.43 1.27-.51.7 1.21-1.07.85-.89.7.14 1.13zM12 8c-2.21 0-4 1.79-4 4s1.79 4 4 4 4-1.79 4-4-1.79-4-4-4zm0 6c-1.1 0-2-.9-2-2s.9-2 2-2 2 .9 2 2-.9 2-2 2z" fill="#616161" /></svg>
<span class="t" style="left:54px;top:864.5px;font-size:12px;line-height:16px;color:#1b1b1b;letter-spacing:-0.057px;">Options</span>
<svg style="left:49px;top:890.0px;" width="16" height="16" viewBox="0 0 24 24"><path d="M20 4H4c-1.1 0-1.99.9-1.99 2L2 18c0 1.1.9 2 2 2h16c1.1 0 2-.9 2-2V6c0-1.1-.9-2-2-2zm0 4l-8 5-8-5V6l8 5 8-5v2z" fill="#3b8be0" /></svg>
<span class="t" style="left:73px;top:890.5px;font-size:12px;line-height:16px;color:#1b1b1b;letter-spacing:-0.207px;">Email Settings</span>
<svg style="left:49px;top:916.0px;" width="16" height="16" viewBox="0 0 24 24"><circle cx="10" cy="7" r="4" fill="#e8643c"/><path d="M2 20v-2c0-2.7 3.6-4.6 8-4.6 1.3 0 2.5.2 3.6.5V20z" fill="#e8643c"/><rect x="14.5" y="15" width="8" height="6.5" rx="1" fill="#e8643c"/><path d="M16.5 15v-1.3a2 2 0 0 1 4 0V15" stroke="#e8643c" stroke-width="1.4" fill="none"/></svg>
<span class="t" style="left:73px;top:916.5px;font-size:12px;line-height:16px;color:#1b1b1b;letter-spacing:-0.335px;">Security</span>
<svg style="left:49px;top:942.0px;" width="16" height="16" viewBox="0 0 24 24"><path d="M6 2h8l6 6v5.2a6.3 6.3 0 0 0-7.6 8.8H6c-1.1 0-2-.9-2-2V4c0-1.1.9-2 2-2z" fill="#62a84b"/><path d="M13 3.5V9h5.5z" fill="#fff" opacity="0.85"/><circle cx="18" cy="18.5" r="3.6" fill="#62a84b"/><path d="M18 13.2v10.6M13.4 15.85l9.2 5.3M13.4 21.15l9.2-5.3" stroke="#62a84b" stroke-width="2"/><circle cx="18" cy="18.5" r="1.5" fill="#fff"/></svg>
<span class="t" style="left:73px;top:942.5px;font-size:12px;line-height:16px;color:#1b1b1b;letter-spacing:-0.255px;">Syslog Server Settings</span>
<svg style="left:49px;top:968.0px;" width="16" height="16" viewBox="0 0 24 24"><circle cx="13" cy="12" r="4" fill="none" stroke="#62a84b" stroke-width="2.4"/><path d="M10 9L6.5 5.5M16 9.5l3.5-4M16 15l3.5 4M9 12H3.5" stroke="#62a84b" stroke-width="2"/><circle cx="6" cy="5" r="2" fill="#62a84b"/><circle cx="20" cy="5" r="2" fill="#62a84b"/><circle cx="20" cy="19.5" r="2" fill="#62a84b"/><circle cx="2.8" cy="12" r="1.9" fill="#62a84b"/></svg>
<span class="t" style="left:73px;top:968.5px;font-size:12px;line-height:16px;color:#1b1b1b;letter-spacing:-0.256px;">SNMP Trap Server Settings</span></div>
<div style="left:308px;top:154px;width:17px;height:1004px;background:#f8f8f8;"></div>
<svg style="left:311px;top:157.8px;" width="11" height="8" viewBox="0 0 11 8"><path d="M1 6.5L5.5 2L10 6.5" stroke="#666" stroke-width="1.1" fill="none"/></svg>
<svg style="left:311px;top:1128.5px;" width="11" height="8" viewBox="0 0 11 8"><path d="M1 1.5L5.5 6L10 1.5" stroke="#666" stroke-width="1.1" fill="none"/></svg>
<div style="left:314px;top:170px;width:5px;height:882px;background:#d0d1d3;border-radius:2.5px;"></div>
<div style="left:10px;top:1141px;width:298px;height:16px;background:#f8f8f8;"></div>
<svg style="left:13px;top:1144px;" width="8" height="11" viewBox="0 0 8 11"><path d="M6.5 1L2 5.5L6.5 10" stroke="#666" stroke-width="1.1" fill="none"/></svg>
<svg style="left:295px;top:1144px;" width="8" height="11" viewBox="0 0 8 11"><path d="M1.5 1L6 5.5L1.5 10" stroke="#666" stroke-width="1.1" fill="none"/></svg>
<div style="left:26px;top:1147px;width:228.5px;height:5px;background:#d0d1d3;border-radius:2.5px;"></div>
<span class="t" style="left:7px;top:1168.5px;font-size:12px;line-height:16px;color:#444;letter-spacing:-0.103px;">Service Output</span>
<div style="left:7px;top:1186px;width:78px;height:6px;background:#c8c8c8;"></div>
<div style="left:333px;top:61px;width:213px;height:23px;background:#c1171d;border-radius:4px 4px 0 0;"></div>
<span class="t" style="left:339px;top:66.0px;font-size:12px;line-height:16px;color:#fff;letter-spacing:-0.113px;">Event Log Consolidation (Security)</span>
<svg style="left:529px;top:68px;" width="11" height="11" viewBox="0 0 11 11"><path d="M0.8 0.8L10.2 10.2M10.2 0.8L0.8 10.2" stroke="#f6cfcf" stroke-width="1.1"/></svg>
<div style="left:333px;top:83px;width:1246px;height:2px;background:#c8232b;"></div>
<svg style="left:1565px;top:70px;" width="9" height="6" viewBox="0 0 9 6"><path d="M1 1.5L4.5 4.5L8 1.5" stroke="#666" stroke-width="1.2" fill="none"/></svg>
<div style="left:333px;top:85px;width:1246px;height:1075px;background:#f9f9f9;border:1px solid #dcdcdc;border-top:none;box-sizing:border-box;"></div>
<div style="left:343px;top:95px;width:1226px;height:62px;background:#d32f2f;"></div>
<svg style="left:358.85px;top:99.1px;" width="56.4" height="56.4" viewBox="0 0 24 24"><path d="M3 20C1.9 20 1 19.1 1 18V6a2 2 0 0 1 2-2h6l2 2h8a2 2 0 0 1 2 2v10a2 2 0 0 1-2 2z" fill="#eba4a6" /><circle cx="16" cy="16" r="6" fill="#d32f2f" stroke="#eba4a6" stroke-width="2"/><path d="M15,12H16.5V16.25L19.36,17.94L18.61,19.16L15,17V12" fill="#eba4a6" /></svg>
<span class="t" style="left:431px;top:106.0px;font-size:20px;line-height:24px;color:#fff;letter-spacing:-0.094px;">Event Log Consolidation - Template Properties</span>
<span class="t" style="left:431px;top:131.0px;font-size:14px;line-height:18px;color:#fff;letter-spacing:-0.102px;">Configure log consolidation (e.g. Schedule Server Manager to download the latest Security Event Log entries and save to Microsoft SQL Server or MySQL).</span>
<svg style="left:1523px;top:111.8px;" width="28" height="28" viewBox="0 0 28 28"><path d="M15.5 3.4A10.7 10.7 0 1 1 12.5 3.4" stroke="#f8b9bd" stroke-width="4" fill="none"/></svg>
<div style="left:346px;top:170px;width:984px;height:919px;background:#eef0f1;"></div>
<div style="left:348px;top:172px;width:53px;height:21px;background:#ececec;border:1px solid #ababab;border-bottom:none;box-sizing:border-box;"></div>
<span class="t" style="left:354.3px;top:175.0px;font-size:12px;line-height:16px;color:#1b1b1b;letter-spacing:-0.431px;">General</span>
<div style="left:402px;top:172px;width:36px;height:21px;background:#ececec;border:1px solid #ababab;border-bottom:none;box-sizing:border-box;"></div>
<span class="t" style="left:407.4px;top:175.0px;font-size:12px;line-height:16px;color:#1b1b1b;letter-spacing:-0.639px;">Logs</span>
<div style="left:439px;top:172px;width:52px;height:21px;background:#ececec;border:1px solid #ababab;border-bottom:none;box-sizing:border-box;"></div>
<span class="t" style="left:444px;top:175.0px;font-size:12px;line-height:16px;color:#1b1b1b;letter-spacing:0.059px;">Options</span>
<div style="left:552px;top:172px;width:53px;height:21px;background:#ececec;border:1px solid #ababab;border-bottom:none;box-sizing:border-box;"></div>
<span class="t" style="left:557px;top:175.0px;font-size:12px;line-height:16px;color:#1b1b1b;letter-spacing:0.331px;">Monitor</span>
<div style="left:605px;top:172px;width:95px;height:21px;background:#ececec;border:1px solid #ababab;border-bottom:none;box-sizing:border-box;"></div>
<span class="t" style="left:611px;top:175.0px;font-size:12px;line-height:16px;color:#1b1b1b;letter-spacing:-0.011px;">Agent Template</span>
<div style="left:700px;top:172px;width:51px;height:21px;background:#ececec;border:1px solid #ababab;border-bottom:none;box-sizing:border-box;"></div>
<span class="t" style="left:706px;top:175.0px;font-size:12px;line-height:16px;color:#1b1b1b;letter-spacing:-0.057px;">Actions</span>
<div style="left:346px;top:192px;width:978px;height:897px;background:#fff;border:1px solid #a8a8a8;box-sizing:border-box;"></div>
<div style="left:491px;top:170px;width:61px;height:23px;background:#fff;border:1px solid #ababab;border-bottom:none;box-sizing:border-box;"></div>
<span class="t" style="left:498px;top:173.5px;font-size:12px;line-height:16px;color:#1b1b1b;letter-spacing:-0.227px;">Columns</span>
<span class="t" style="left:368.6px;top:218.5px;font-size:12px;line-height:16px;color:#1b1b1b;letter-spacing:-0.708px;">Log</span>
<div style="left:367px;top:239px;width:400px;height:28px;background:#fff;border:1px solid #ad4846;border-radius:2.5px;box-sizing:border-box;"></div>
<svg style="left:369px;top:241px;" width="396" height="24" viewBox="0 0 396 24"><rect x="0.5" y="0.5" width="395" height="23" fill="none" stroke="#606060" stroke-width="1" stroke-dasharray="2 1" shape-rendering="crispEdges"/></svg>
<span class="t" style="left:373px;top:245.5px;font-size:12px;line-height:16px;color:#1b1b1b;letter-spacing:-0.249px;">Security</span>
<svg style="left:748px;top:249px;" width="12" height="8.5" viewBox="0 0 12 8.5"><path d="M1 1.5L6.0 7.0L11 1.5" stroke="#111" stroke-width="1.9" fill="none"/></svg>
<svg style="left:1269.1px;top:227.1px;" width="20" height="20" viewBox="0 0 24 24"><path d="M12 2C6.48 2 2 6.48 2 12s4.48 10 10 10 10-4.48 10-10S17.52 2 12 2zm1 17h-2v-2h2v2zm2.07-7.75l-.9.92C13.45 12.9 13 13.5 13 15h-2v-.5c0-1.1.45-2.1 1.17-2.83l1.24-1.26c.37-.36.59-.86.59-1.41 0-1.1-.9-2-2-2s-2 .9-2 2H8c0-2.21 1.79-4 4-4s4 1.79 4 4c0 .88-.36 1.68-.93 2.25z" fill="#1976d2" /></svg>
<svg style="left:367px;top:299px;" width="17" height="13" viewBox="0 0 17 13"><rect x="0" y="0" width="4.9" height="13" fill="#5c5c5c"/><rect x="6.05" y="0" width="4.9" height="13" fill="#5c5c5c"/><rect x="12.1" y="0" width="4.9" height="13" fill="#5c5c5c"/></svg>
<span class="t" style="left:391px;top:298.5px;font-size:12px;line-height:16px;color:#1b1b1b;letter-spacing:0.075px;">Column definitions</span>
<div style="left:505px;top:291px;width:28px;height:28px;background:#efefef;border:1px solid #adadad;border-radius:1.5px;box-sizing:border-box;"></div>
<svg style="left:507px;top:293px;" width="24" height="24" viewBox="0 0 24 24"><path d="M19 13h-6v6h-2v-6H5v-2h6V5h2v6h6v2z" fill="#3a3a3a" /></svg>
<div style="left:537px;top:291px;width:28px;height:28px;background:#f6f6f6;border:1px solid #e4e4e4;border-radius:1.5px;box-sizing:border-box;"></div>
<svg style="left:539px;top:293px;" width="24" height="24" viewBox="0 0 24 24"><path d="M6 19c0 1.1.9 2 2 2h8c1.1 0 2-.9 2-2V7H6v12zM8 9h8v10H8V9zm7.5-5l-1-1h-5l-1 1H5v2h14V4h-3.5z" fill="#c0c0c0" /></svg>
<div style="left:569px;top:291px;width:28px;height:28px;background:#efefef;border:1px solid #adadad;border-radius:1.5px;box-sizing:border-box;"></div>
<svg style="left:571px;top:293px;" width="24" height="24" viewBox="0 0 24 24"><path d="M3 13.6V4.3Q3 2.8 4.5 2.8H13.9" stroke="#333" stroke-width="1.9" fill="none"/><path d="M6.95 17.7V8.6Q6.95 7.1 8.45 7.1H17.9" stroke="#333" stroke-width="1.9" fill="none"/><rect x="11.1" y="11.4" width="9.9" height="9.5" rx="1.9" fill="none" stroke="#333" stroke-width="2"/><rect x="13.3" y="15.2" width="5.6" height="1.8" fill="#333"/></svg>
<div style="left:363px;top:327px;width:910px;height:102px;background:#fff;border:1px solid #9a9a9a;box-sizing:border-box;"></div>
<div style="left:364px;top:328px;width:908px;height:28px;background:#f5f5f5;border-bottom:2px solid #e4e4e4;box-sizing:border-box;"></div>
<div style="left:424px;top:328px;width:2px;height:26px;background:#e2e2e2;"></div>
<div style="left:581px;top:328px;width:2px;height:26px;background:#e2e2e2;"></div>
<div style="left:713px;top:328px;width:2px;height:26px;background:#e2e2e2;"></div>
<div style="left:830px;top:328px;width:2px;height:26px;background:#e2e2e2;"></div>
<div style="left:931px;top:328px;width:2px;height:26px;background:#e2e2e2;"></div>
<div style="left:979px;top:328px;width:2px;height:26px;background:#e2e2e2;"></div>
<div style="left:1015px;top:328px;width:2px;height:26px;background:#e2e2e2;"></div>
<div style="left:1270px;top:328px;width:2px;height:26px;background:#e2e2e2;"></div>
<span class="t" style="left:370px;top:334.5px;font-size:12px;line-height:16px;color:#1b1b1b;letter-spacing:-0.422px;">Enabled</span>
<span class="t" style="left:432px;top:334.5px;font-size:12px;line-height:16px;color:#1b1b1b;letter-spacing:-0.836px;">Key</span>
<span class="t" style="left:589px;top:334.5px;font-size:12px;line-height:16px;color:#1b1b1b;letter-spacing:-0.339px;">Name</span>
<span class="t" style="left:721px;top:334.5px;font-size:12px;line-height:16px;color:#1b1b1b;letter-spacing:-0.121px;">Data Type</span>
<span class="t" style="left:838px;top:334.5px;font-size:12px;line-height:16px;color:#1b1b1b;letter-spacing:-0.203px;">Column Size</span>
<span class="t" style="left:938px;top:334.5px;font-size:12px;line-height:16px;color:#1b1b1b;letter-spacing:-0.086px;">Index</span>
<svg style="left:987px;top:335px;" width="16" height="16" viewBox="0 0 24 24"><path d="M16,16.92C15.67,16.97 15.34,17 15,17C14.66,17 14.33,16.97 14,16.92V13.41L11.5,15.89C11,15.5 10.5,15 10.11,14.5L12.59,12H9.08C9.03,11.67 9,11.34 9,11C9,10.66 9.03,10.33 9.08,10H12.59L10.11,7.5C10.3,7.25 10.5,7 10.76,6.76V6.76C11,6.5 11.25,6.3 11.5,6.11L14,8.59V5.08C14.33,5.03 14.66,5 15,5C15.34,5 15.67,5.03 16,5.08V8.59L18.5,6.11C19,6.5 19.5,7 19.89,7.5L17.41,10H20.92C20.97,10.33 21,10.66 21,11C21,11.34 20.97,11.67 20.92,12H17.41L19.89,14.5C19.7,14.75 19.5,15 19.24,15.24V15.24C19,15.5 18.75,15.7 18.5,15.89L16,13.41V16.92H16V16.92M5,19A2,2 0 0,1 7,17A2,2 0 0,1 9,19A2,2 0 0,1 7,21A2,2 0 0,1 5,19H5Z" fill="#3a3a3a" /></svg>
<div style="left:388px;top:367px;width:14px;height:13px;background:#fff;border:1px solid #4a4a4a;box-sizing:border-box;"><svg style="left:0px;top:0px;" width="12" height="11" viewBox="0 0 12 11"><path d="M1.6 5.9L5.4 9.4L10.3 1.6" stroke="#1a1a1a" stroke-width="2" fill="none"/></svg></div>
<div style="left:428px;top:360px;width:153px;height:28px;background:#fff;border:1px solid #c2c2c2;border-radius:1.5px;box-sizing:border-box;"></div>
<span class="t" style="left:435px;top:366.5px;font-size:12px;line-height:16px;color:#1b1b1b;letter-spacing:-0.790px;">ACCOUNT_NAME</span>
<div style="left:585px;top:360px;width:128px;height:28px;background:#fff;border:1px solid #c2c2c2;border-radius:1.5px;box-sizing:border-box;"></div>
<span class="t" style="left:592px;top:366.5px;font-size:12px;line-height:16px;color:#1b1b1b;letter-spacing:-0.062px;">Account Name</span>
<div style="left:715px;top:360px;width:115px;height:28px;background:#fff;border:1px solid #c2c2c2;border-radius:1.5px;box-sizing:border-box;"></div>
<span class="t" style="left:724px;top:366.5px;font-size:12px;line-height:16px;color:#1b1b1b;letter-spacing:-0.069px;">String</span>
<svg style="left:809px;top:370.5px;" width="12" height="8" viewBox="0 0 12 8"><path d="M1 1.5L6.0 6.5L11 1.5" stroke="#3a3a3a" stroke-width="1.6" fill="none"/></svg>
<div style="left:834px;top:360px;width:96px;height:28px;background:#fff;border:1px solid #c2c2c2;border-radius:1.5px;box-sizing:border-box;"></div>
<span class="t" style="left:841px;top:366.5px;font-size:12px;line-height:16px;color:#1b1b1b;letter-spacing:-0.508px;">256</span>
<div style="left:949px;top:367px;width:14px;height:13px;background:#fff;border:1px solid #4a4a4a;box-sizing:border-box;"></div>
<div style="left:985px;top:360px;width:28px;height:28px;background:#efefef;border:1px solid #adadad;border-radius:1.5px;box-sizing:border-box;"></div>
<svg style="left:993px;top:370.5px;" width="12" height="8" viewBox="0 0 12 8"><path d="M1 1.5L6.0 6.5L11 1.5" stroke="#3a3a3a" stroke-width="1.8" fill="none"/></svg>
<div style="left:388px;top:403px;width:14px;height:13px;background:#fff;border:1px solid #4a4a4a;box-sizing:border-box;"><svg style="left:0px;top:0px;" width="12" height="11" viewBox="0 0 12 11"><path d="M1.6 5.9L5.4 9.4L10.3 1.6" stroke="#1a1a1a" stroke-width="2" fill="none"/></svg></div>
<div style="left:428px;top:396px;width:153px;height:28px;background:#fff;border:1px solid #c2c2c2;border-radius:1.5px;box-sizing:border-box;"></div>
<span class="t" style="left:435px;top:402.5px;font-size:12px;line-height:16px;color:#1b1b1b;letter-spacing:-0.951px;">TARGET_ACCOUNT_NAME</span>
<div style="left:585px;top:396px;width:128px;height:28px;background:#fff;border:1px solid #c2c2c2;border-radius:1.5px;box-sizing:border-box;"></div>
<span class="t" style="left:592px;top:402.5px;font-size:12px;line-height:16px;color:#1b1b1b;letter-spacing:-0.039px;">Target Account Name</span>
<div style="left:715px;top:396px;width:115px;height:28px;background:#fff;border:1px solid #c2c2c2;border-radius:1.5px;box-sizing:border-box;"></div>
<span class="t" style="left:724px;top:402.5px;font-size:12px;line-height:16px;color:#1b1b1b;letter-spacing:-0.069px;">String</span>
<svg style="left:809px;top:406.5px;" width="12" height="8" viewBox="0 0 12 8"><path d="M1 1.5L6.0 6.5L11 1.5" stroke="#3a3a3a" stroke-width="1.6" fill="none"/></svg>
<div style="left:834px;top:396px;width:96px;height:28px;background:#fff;border:1px solid #c2c2c2;border-radius:1.5px;box-sizing:border-box;"></div>
<span class="t" style="left:841px;top:402.5px;font-size:12px;line-height:16px;color:#1b1b1b;letter-spacing:-0.508px;">256</span>
<div style="left:949px;top:403px;width:14px;height:13px;background:#fff;border:1px solid #4a4a4a;box-sizing:border-box;"><svg style="left:0px;top:0px;" width="12" height="11" viewBox="0 0 12 11"><path d="M1.6 5.9L5.4 9.4L10.3 1.6" stroke="#1a1a1a" stroke-width="2" fill="none"/></svg></div>
<div style="left:985px;top:396px;width:28px;height:28px;background:#efefef;border:1px solid #adadad;border-radius:1.5px;box-sizing:border-box;"></div>
<svg style="left:993px;top:406.5px;" width="12" height="8" viewBox="0 0 12 8"><path d="M1 1.5L6.0 6.5L11 1.5" stroke="#3a3a3a" stroke-width="1.8" fill="none"/></svg>
<div style="left:1277px;top:327px;width:28px;height:28px;background:#f6f6f6;border:1px solid #e4e4e4;border-radius:1.5px;box-sizing:border-box;"></div>
<svg style="left:1284.5px;top:337px;" width="13" height="8.5" viewBox="0 0 13 8.5"><path d="M1 7.0L6.5 1.5L12 7.0" stroke="#b8b8b8" stroke-width="1.7" fill="none"/></svg>
<div style="left:1277px;top:359px;width:28px;height:28px;background:#f6f6f6;border:1px solid #e4e4e4;border-radius:1.5px;box-sizing:border-box;"></div>
<svg style="left:1284.5px;top:369px;" width="13" height="8.5" viewBox="0 0 13 8.5"><path d="M1 1.5L6.5 7.0L12 1.5" stroke="#b8b8b8" stroke-width="1.7" fill="none"/></svg>
<svg style="left:363px;top:452px;" width="24" height="24" viewBox="0 0 24 24"><path d="M16,16.92C15.67,16.97 15.34,17 15,17C14.66,17 14.33,16.97 14,16.92V13.41L11.5,15.89C11,15.5 10.5,15 10.11,14.5L12.59,12H9.08C9.03,11.67 9,11.34 9,11C9,10.66 9.03,10.33 9.08,10H12.59L10.11,7.5C10.3,7.25 10.5,7 10.76,6.76V6.76C11,6.5 11.25,6.3 11.5,6.11L14,8.59V5.08C14.33,5.03 14.66,5 15,5C15.34,5 15.67,5.03 16,5.08V8.59L18.5,6.11C19,6.5 19.5,7 19.89,7.5L17.41,10H20.92C20.97,10.33 21,10.66 21,11C21,11.34 20.97,11.67 20.92,12H17.41L19.89,14.5C19.7,14.75 19.5,15 19.24,15.24V15.24C19,15.5 18.75,15.7 18.5,15.89L16,13.41V16.92H16V16.92M5,19A2,2 0 0,1 7,17A2,2 0 0,1 9,19A2,2 0 0,1 7,21A2,2 0 0,1 5,19H5Z" fill="#555" /></svg>
<span class="t" style="left:391px;top:456.5px;font-size:12px;line-height:16px;color:#1b1b1b;letter-spacing:-0.299px;">Regular expressions</span>
<div style="left:510px;top:449px;width:28px;height:28px;background:#efefef;border:1px solid #adadad;border-radius:1.5px;box-sizing:border-box;"></div>
<svg style="left:512px;top:451px;" width="24" height="24" viewBox="0 0 24 24"><path d="M19 13h-6v6h-2v-6H5v-2h6V5h2v6h6v2z" fill="#3a3a3a" /></svg>
<div style="left:542px;top:449px;width:28px;height:28px;background:#f6f6f6;border:1px solid #e4e4e4;border-radius:1.5px;box-sizing:border-box;"></div>
<svg style="left:544px;top:451px;" width="24" height="24" viewBox="0 0 24 24"><path d="M6 19c0 1.1.9 2 2 2h8c1.1 0 2-.9 2-2V7H6v12zM8 9h8v10H8V9zm7.5-5l-1-1h-5l-1 1H5v2h14V4h-3.5z" fill="#c0c0c0" /></svg>
<div style="left:574px;top:449px;width:28px;height:28px;background:#efefef;border:1px solid #adadad;border-radius:1.5px;box-sizing:border-box;"></div>
<svg style="left:576px;top:451px;" width="24" height="24" viewBox="0 0 24 24"><path d="M3 13.6V4.3Q3 2.8 4.5 2.8H13.9" stroke="#333" stroke-width="1.9" fill="none"/><path d="M6.95 17.7V8.6Q6.95 7.1 8.45 7.1H17.9" stroke="#333" stroke-width="1.9" fill="none"/><rect x="11.1" y="11.4" width="9.9" height="9.5" rx="1.9" fill="none" stroke="#333" stroke-width="2"/><rect x="13.3" y="15.2" width="5.6" height="1.8" fill="#333"/></svg>
<div style="left:363px;top:485px;width:910px;height:166px;background:#fff;border:1px solid #9a9a9a;box-sizing:border-box;"></div>
<div style="left:364px;top:486px;width:908px;height:28px;background:#f5f5f5;border-bottom:2px solid #e4e4e4;box-sizing:border-box;"></div>
<div style="left:424px;top:486px;width:2px;height:26px;background:#e2e2e2;"></div>
<div style="left:1270px;top:486px;width:2px;height:26px;background:#e2e2e2;"></div>
<span class="t" style="left:370px;top:492.5px;font-size:12px;line-height:16px;color:#1b1b1b;letter-spacing:-0.422px;">Enabled</span>
<span class="t" style="left:432px;top:492.5px;font-size:12px;line-height:16px;color:#1b1b1b;letter-spacing:-0.449px;">Value</span>
<div style="left:388px;top:541px;width:14px;height:13px;background:#fff;border:1px solid #4a4a4a;box-sizing:border-box;"><svg style="left:0px;top:0px;" width="12" height="11" viewBox="0 0 12 11"><path d="M1.6 5.9L5.4 9.4L10.3 1.6" stroke="#1a1a1a" stroke-width="2" fill="none"/></svg></div>
<div style="left:428px;top:518px;width:810px;height:48px;background:#fff;border:1px solid #c2c2c2;border-radius:1.5px;box-sizing:border-box;"></div>
<span class="t" style="left:435px;top:523.5px;font-size:12px;line-height:16px;color:#1b1b1b;letter-spacing:0.138px;">Subject:\r\n\s+Security ID:[^\r\n]+\r\n\s+Account Name:\s+(?&lt;ACCOUNT_NAME&gt;[^\r\n]+)</span>
<div style="left:1220px;top:519px;width:17px;height:46px;background:#fcfcfc;"></div>
<svg style="left:1222.7px;top:524.5px;" width="10.5" height="6.5" viewBox="0 0 10.5 6.5"><path d="M1 5.0L5.25 1.5L9.5 5.0" stroke="#777" stroke-width="1.1" fill="none"/></svg>
<svg style="left:1222.7px;top:553.5px;" width="10.5" height="6.5" viewBox="0 0 10.5 6.5"><path d="M1 1.5L5.25 5.0L9.5 1.5" stroke="#777" stroke-width="1.1" fill="none"/></svg>
<div style="left:1242px;top:518px;width:28px;height:28px;background:#efefef;border:1px solid #adadad;border-radius:1.5px;box-sizing:border-box;"></div>
<svg style="left:1244px;top:520px;" width="24" height="24" viewBox="0 0 24 24"><rect x="3" y="3" width="18" height="18" rx="2.2" fill="#3a3a3a"/><text x="5" y="16.4" font-family="Liberation Sans, sans-serif" font-size="12.5" font-weight="bold" textLength="14" lengthAdjust="spacing" fill="#fff">(<tspan font-style="italic">x</tspan>)</text></svg>
<div style="left:388px;top:609px;width:14px;height:13px;background:#fff;border:1px solid #4a4a4a;box-sizing:border-box;"><svg style="left:0px;top:0px;" width="12" height="11" viewBox="0 0 12 11"><path d="M1.6 5.9L5.4 9.4L10.3 1.6" stroke="#1a1a1a" stroke-width="2" fill="none"/></svg></div>
<div style="left:428px;top:586px;width:810px;height:48px;background:#fff;border:1px solid #c2c2c2;border-radius:1.5px;box-sizing:border-box;"></div>
<span class="t" style="left:435px;top:591.5px;font-size:12px;line-height:16px;color:#1b1b1b;letter-spacing:0.018px;">(New Logon:|Account For Which Logon Failed:|Account That Was Locked Out:|New Account:)\r\n\s+Security ID:[^\r\n]+\r\n\s+Account Name:\s+(?</span>
<span class="t" style="left:435px;top:607.5px;font-size:12px;line-height:16px;color:#1b1b1b;letter-spacing:-0.234px;">&lt;TARGET_ACCOUNT_NAME&gt;[^\r\n]+)</span>
<div style="left:1220px;top:587px;width:17px;height:46px;background:#fcfcfc;"></div>
<svg style="left:1222.7px;top:592.5px;" width="10.5" height="6.5" viewBox="0 0 10.5 6.5"><path d="M1 5.0L5.25 1.5L9.5 5.0" stroke="#777" stroke-width="1.1" fill="none"/></svg>
<svg style="left:1222.7px;top:621.5px;" width="10.5" height="6.5" viewBox="0 0 10.5 6.5"><path d="M1 1.5L5.25 5.0L9.5 1.5" stroke="#777" stroke-width="1.1" fill="none"/></svg>
<div style="left:1242px;top:586px;width:28px;height:28px;background:#efefef;border:1px solid #adadad;border-radius:1.5px;box-sizing:border-box;"></div>
<svg style="left:1244px;top:588px;" width="24" height="24" viewBox="0 0 24 24"><rect x="3" y="3" width="18" height="18" rx="2.2" fill="#3a3a3a"/><text x="5" y="16.4" font-family="Liberation Sans, sans-serif" font-size="12.5" font-weight="bold" textLength="14" lengthAdjust="spacing" fill="#fff">(<tspan font-style="italic">x</tspan>)</text></svg>
<div style="left:1277px;top:485px;width:28px;height:28px;background:#f6f6f6;border:1px solid #e4e4e4;border-radius:1.5px;box-sizing:border-box;"></div>
<svg style="left:1284.5px;top:495px;" width="13" height="8.5" viewBox="0 0 13 8.5"><path d="M1 7.0L6.5 1.5L12 7.0" stroke="#b8b8b8" stroke-width="1.7" fill="none"/></svg>
<div style="left:1277px;top:517px;width:28px;height:28px;background:#f6f6f6;border:1px solid #e4e4e4;border-radius:1.5px;box-sizing:border-box;"></div>
<svg style="left:1284.5px;top:527px;" width="13" height="8.5" viewBox="0 0 13 8.5"><path d="M1 1.5L6.5 7.0L12 1.5" stroke="#b8b8b8" stroke-width="1.7" fill="none"/></svg>
<div style="left:358px;top:1109px;width:80px;height:26px;background:#d32f2f;border:1px solid #c22828;border-radius:2px;box-sizing:border-box;"></div>
<span class="t" style="left:386px;top:1114.5px;font-size:12px;line-height:16px;color:#fff;letter-spacing:-0.781px;">Save</span>
<div style="left:446px;top:1109px;width:80px;height:26px;background:#d32f2f;border:1px solid #c22828;border-radius:2px;box-sizing:border-box;"></div>
<span class="t" style="left:469px;top:1114.5px;font-size:12px;line-height:16px;color:#fff;letter-spacing:-0.134px;">Export</span>
<div style="left:534px;top:1109px;width:89px;height:26px;background:#d32f2f;border:1px solid #c22828;border-radius:2px;box-sizing:border-box;"></div>
<span class="t" style="left:539px;top:1114.5px;font-size:12px;line-height:16px;color:#fff;letter-spacing:-0.134px;">View Summary</span>
<div style="left:1386px;top:1109px;width:80px;height:26px;background:#d32f2f;border:1px solid #c22828;border-radius:2px;box-sizing:border-box;"></div>
<span class="t" style="left:1409px;top:1114.5px;font-size:12px;line-height:16px;color:#fff;letter-spacing:-0.138px;">Delete</span>
<div style="left:1474px;top:1109px;width:80px;height:26px;background:#d32f2f;border:1px solid #c22828;border-radius:2px;box-sizing:border-box;"></div>
<span class="t" style="left:1500px;top:1114.5px;font-size:12px;line-height:16px;color:#fff;letter-spacing:-0.422px;">Close</span>
<div style="left:1330px;top:170px;width:236px;height:919px;background:#f9f9f9;border:1px solid #dadada;box-sizing:border-box;"></div>
<div style="left:1331px;top:171px;width:234px;height:22px;background:#f0f0f0;"></div>
<span class="t" style="left:1337px;top:174.5px;font-size:12px;line-height:16px;color:#1b1b1b;letter-spacing:-0.169px;">Assignments</span>
<svg style="left:1413px;top:180px;" width="112" height="5" viewBox="0 0 112 5"><path d="M0 0h1v1h-1zM0 4h1v1h-1zM2 2h1v1h-1zM4 0h1v1h-1zM4 4h1v1h-1zM6 2h1v1h-1zM8 0h1v1h-1zM8 4h1v1h-1zM10 2h1v1h-1zM12 0h1v1h-1zM12 4h1v1h-1zM14 2h1v1h-1zM16 0h1v1h-1zM16 4h1v1h-1zM18 2h1v1h-1zM20 0h1v1h-1zM20 4h1v1h-1zM22 2h1v1h-1zM24 0h1v1h-1zM24 4h1v1h-1zM26 2h1v1h-1zM28 0h1v1h-1zM28 4h1v1h-1zM30 2h1v1h-1zM32 0h1v1h-1zM32 4h1v1h-1zM34 2h1v1h-1zM36 0h1v1h-1zM36 4h1v1h-1zM38 2h1v1h-1zM40 0h1v1h-1zM40 4h1v1h-1zM42 2h1v1h-1zM44 0h1v1h-1zM44 4h1v1h-1zM46 2h1v1h-1zM48 0h1v1h-1zM48 4h1v1h-1zM50 2h1v1h-1zM52 0h1v1h-1zM52 4h1v1h-1zM54 2h1v1h-1zM56 0h1v1h-1zM56 4h1v1h-1zM58 2h1v1h-1zM60 0h1v1h-1zM60 4h1v1h-1zM62 2h1v1h-1zM64 0h1v1h-1zM64 4h1v1h-1zM66 2h1v1h-1zM68 0h1v1h-1zM68 4h1v1h-1zM70 2h1v1h-1zM72 0h1v1h-1zM72 4h1v1h-1zM74 2h1v1h-1zM76 0h1v1h-1zM76 4h1v1h-1zM78 2h1v1h-1zM80 0h1v1h-1zM80 4h1v1h-1zM82 2h1v1h-1zM84 0h1v1h-1zM84 4h1v1h-1zM86 2h1v1h-1zM88 0h1v1h-1zM88 4h1v1h-1zM90 2h1v1h-1zM92 0h1v1h-1zM92 4h1v1h-1zM94 2h1v1h-1zM96 0h1v1h-1zM96 4h1v1h-1zM98 2h1v1h-1zM100 0h1v1h-1zM100 4h1v1h-1zM102 2h1v1h-1zM104 0h1v1h-1zM104 4h1v1h-1zM106 2h1v1h-1zM108 0h1v1h-1zM108 4h1v1h-1zM110 2h1v1h-1z" fill="#b4b4b4" shape-rendering="crispEdges"/></svg>
<svg style="left:1527px;top:175px;" width="15" height="15" viewBox="0 0 24 24"><path d="M16.59 8.59L12 13.17 7.41 8.59 6 10l6 6 6-6z" fill="#555" /></svg>
<svg style="left:1548px;top:176.5px;" width="9" height="11" viewBox="0 0 9 11"><path d="M2 0.5H6.5M2 0V6.5M1 6.5H8M4.5 7V11" stroke="#444" stroke-width="1" fill="none"/><rect x="5" y="0" width="2" height="6.5" fill="#444"/></svg>
<svg style="left:1330.7px;top:203px;" width="24" height="24" viewBox="0 0 24 24"><path d="M4,1H20A1,1 0 0,1 21,2V6A1,1 0 0,1 20,7H4A1,1 0 0,1 3,6V2A1,1 0 0,1 4,1M4,9H20A1,1 0 0,1 21,10V14A1,1 0 0,1 20,15H4A1,1 0 0,1 3,14V10A1,1 0 0,1 4,9M4,17H20A1,1 0 0,1 21,18V22A1,1 0 0,1 20,23H4A1,1 0 0,1 3,22V18A1,1 0 0,1 4,17M9,5H10V3H9V5M9,13H10V11H9V13M9,21H10V19H9V21M5,3V5H7V3H5M5,11V13H7V11H5M5,19V21H7V19H5Z" fill="#2490d4" fill-rule="evenodd"/></svg>
<span class="t" style="left:1360.5px;top:207.0px;font-size:14px;line-height:18px;color:#1b1b1b;font-weight:bold;letter-spacing:-0.594px;">Hosts</span>
<div style="left:1331px;top:234px;width:200px;height:28px;background:#fff;border:1px solid #c9c9c9;box-sizing:border-box;"></div>
<span class="t" style="left:1340px;top:240.5px;font-size:12px;line-height:16px;color:#444;letter-spacing:-0.045px;">Select from list</span>
<svg style="left:1509.5px;top:244.3px;" width="12.5" height="8.4" viewBox="0 0 12.5 8.4"><path d="M1 1.5L6.25 6.9L11.5 1.5" stroke="#3a3a3a" stroke-width="1.9" fill="none"/></svg>
<div style="left:1535px;top:234px;width:28px;height:28px;background:#efefef;border:1px solid #adadad;border-radius:1.5px;box-sizing:border-box;"></div>
<svg style="left:1537px;top:236px;" width="24" height="24" viewBox="0 0 24 24"><path d="M19 13h-6v6h-2v-6H5v-2h6V5h2v6h6v2z" fill="#3a3a3a" /></svg>
<div style="left:1331px;top:266px;width:200px;height:92px;background:#fff;border:1px solid #8e8e8e;box-sizing:border-box;overflow:hidden;"><span class="t" style="left:8px;top:5.0px;font-size:12px;line-height:16px;color:#1b1b1b;letter-spacing:-0.091px;">Production Web Server</span><span class="t" style="left:8px;top:29.0px;font-size:12px;line-height:16px;color:#1b1b1b;letter-spacing:-0.038px;">server2016dc-2.cornerbowlsoftware.com</span></div>
<div style="left:1535px;top:266px;width:28px;height:28px;background:#f6f6f6;border:1px solid #e4e4e4;border-radius:1.5px;box-sizing:border-box;"></div>
<svg style="left:1537px;top:268px;" width="24" height="24" viewBox="0 0 24 24"><path d="M3 17.25V21h3.75L17.81 9.94l-3.75-3.75L3 17.25zM20.71 7.04a.996.996 0 0 0 0-1.41l-2.34-2.34a.996.996 0 0 0-1.41 0l-1.83 1.83 3.75 3.75 1.83-1.83z" fill="#c4c4c4" /></svg>
<div style="left:1535px;top:298px;width:28px;height:28px;background:#f6f6f6;border:1px solid #e4e4e4;border-radius:1.5px;box-sizing:border-box;"></div>
<svg style="left:1537px;top:300px;" width="24" height="24" viewBox="0 0 24 24"><rect x="4" y="4" width="16" height="16" rx="2" fill="none" stroke="#c6c6c6" stroke-width="2"/><rect x="7" y="11" width="10" height="2" fill="#c6c6c6"/></svg>
<div style="left:1535px;top:330px;width:28px;height:28px;background:#efefef;border:1px solid #adadad;border-radius:1.5px;box-sizing:border-box;"></div>
<svg style="left:1537px;top:332px;" width="24" height="24" viewBox="0 0 24 24"><path d="M3 13.6V4.3Q3 2.8 4.5 2.8H13.9" stroke="#333" stroke-width="1.9" fill="none"/><path d="M6.95 17.7V8.6Q6.95 7.1 8.45 7.1H17.9" stroke="#333" stroke-width="1.9" fill="none"/><rect x="11.1" y="11.4" width="9.9" height="9.5" rx="1.9" fill="none" stroke="#333" stroke-width="2"/><rect x="13.3" y="15.2" width="5.6" height="1.8" fill="#333"/></svg>
<svg style="left:1331px;top:372px;" width="24" height="24" viewBox="0 0 24 24"><path d="M10 4H4c-1.1 0-1.99.9-1.99 2L2 18c0 1.1.9 2 2 2h16c1.1 0 2-.9 2-2V8c0-1.1-.9-2-2-2h-8l-2-2z" fill="#616161" /></svg>
<span class="t" style="left:1360.3px;top:376.0px;font-size:14px;line-height:18px;color:#1b1b1b;font-weight:bold;letter-spacing:-0.275px;">Host Groups</span>
<div style="left:1331px;top:403px;width:200px;height:28px;background:#fff;border:1px solid #c9c9c9;box-sizing:border-box;"></div>
<span class="t" style="left:1340px;top:409.5px;font-size:12px;line-height:16px;color:#444;letter-spacing:-0.045px;">Select from list</span>
<svg style="left:1509.5px;top:413.3px;" width="12.5" height="8.4" viewBox="0 0 12.5 8.4"><path d="M1 1.5L6.25 6.9L11.5 1.5" stroke="#3a3a3a" stroke-width="1.9" fill="none"/></svg>
<div style="left:1535px;top:403px;width:28px;height:28px;background:#efefef;border:1px solid #adadad;border-radius:1.5px;box-sizing:border-box;"></div>
<svg style="left:1537px;top:405px;" width="24" height="24" viewBox="0 0 24 24"><path d="M19 13h-6v6h-2v-6H5v-2h6V5h2v6h6v2z" fill="#3a3a3a" /></svg>
<div style="left:1331px;top:439px;width:234px;height:1px;background:#bdbdbd;"></div>
<svg style="left:1331px;top:462px;" width="24" height="24" viewBox="0 0 24 24"><path d="M10 4H4c-1.1 0-1.99.9-1.99 2L2 18c0 1.1.9 2 2 2h16c1.1 0 2-.9 2-2V8c0-1.1-.9-2-2-2h-8l-2-2z" fill="#616161" /></svg>
<span class="t" style="left:1360.3px;top:466.3px;font-size:14px;line-height:18px;color:#1b1b1b;font-weight:bold;letter-spacing:-0.183px;">Template Groups</span>
<div style="left:1331px;top:493px;width:200px;height:28px;background:#fff;border:1px solid #c9c9c9;box-sizing:border-box;"></div>
<span class="t" style="left:1340px;top:499.5px;font-size:12px;line-height:16px;color:#444;letter-spacing:-0.045px;">Select from list</span>
<svg style="left:1509.5px;top:503.3px;" width="12.5" height="8.4" viewBox="0 0 12.5 8.4"><path d="M1 1.5L6.25 6.9L11.5 1.5" stroke="#3a3a3a" stroke-width="1.9" fill="none"/></svg>
<div style="left:1535px;top:493px;width:28px;height:28px;background:#efefef;border:1px solid #adadad;border-radius:1.5px;box-sizing:border-box;"></div>
<svg style="left:1537px;top:495px;" width="24" height="24" viewBox="0 0 24 24"><path d="M19 13h-6v6h-2v-6H5v-2h6V5h2v6h6v2z" fill="#3a3a3a" /></svg>
<div style="left:1331px;top:525px;width:200px;height:60px;background:#fff;border:1px solid #8e8e8e;box-sizing:border-box;overflow:hidden;"><span class="t" style="left:8px;top:5.0px;font-size:12px;line-height:16px;color:#1b1b1b;letter-spacing:-0.072px;">Event Log Management</span><span class="t" style="left:8px;top:28.5px;font-size:12px;line-height:16px;color:#1b1b1b;letter-spacing:-0.004px;">Log Consolidation</span></div>
<div style="left:1535px;top:525px;width:28px;height:28px;background:#f6f6f6;border:1px solid #e4e4e4;border-radius:1.5px;box-sizing:border-box;"></div>
<svg style="left:1537px;top:527px;" width="24" height="24" viewBox="0 0 24 24"><rect x="4" y="4" width="16" height="16" rx="2" fill="none" stroke="#c6c6c6" stroke-width="2"/><rect x="7" y="11" width="10" height="2" fill="#c6c6c6"/></svg>
<div style="left:1535px;top:557px;width:28px;height:28px;background:#efefef;border:1px solid #adadad;border-radius:1.5px;box-sizing:border-box;"></div>
<svg style="left:1537px;top:559px;" width="24" height="24" viewBox="0 0 24 24"><path d="M3 13.6V4.3Q3 2.8 4.5 2.8H13.9" stroke="#333" stroke-width="1.9" fill="none"/><path d="M6.95 17.7V8.6Q6.95 7.1 8.45 7.1H17.9" stroke="#333" stroke-width="1.9" fill="none"/><rect x="11.1" y="11.4" width="9.9" height="9.5" rx="1.9" fill="none" stroke="#333" stroke-width="2"/><rect x="13.3" y="15.2" width="5.6" height="1.8" fill="#333"/></svg>
<div style="left:0;top:0;width:1px;height:1193px;background:#3c3c3c;"></div>
<div style="left:0;top:0;width:1586px;height:1px;background:#6a6a6a;"></div>
<div style="left:1585px;top:0;width:1px;height:1193px;background:#7a7a7a;"></div>
<div style="left:0;top:1192px;width:1586px;height:1px;background:#2a2a2a;"></div>
</div></body></html>
